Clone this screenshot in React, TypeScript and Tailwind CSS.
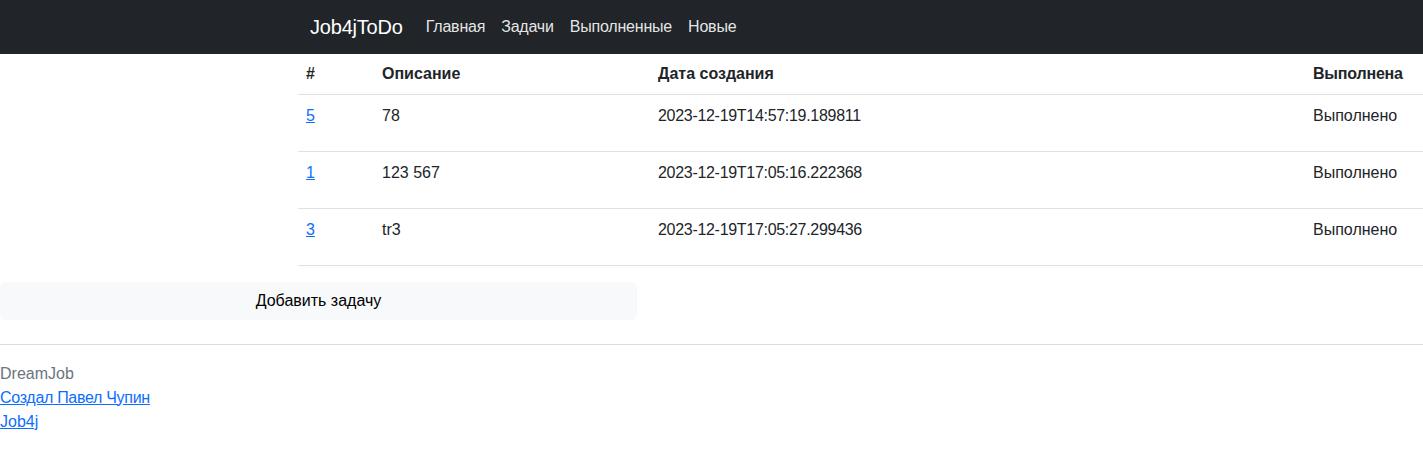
const rows = [
  { id: 5, description: "78", created: "2023-12-19T14:57:19.189811", done: "Выполнено" },
  { id: 1, description: "123 567", created: "2023-12-19T17:05:16.222368", done: "Выполнено" },
  { id: 3, description: "tr3", created: "2023-12-19T17:05:27.299436", done: "Выполнено" },
];

export default function App() {
  return (
    <div className="min-h-screen bg-white font-['Liberation_Sans',Arial,sans-serif] text-[16px] leading-6 text-[#212529]">
      <nav className="flex h-[54px] items-center bg-[#212529] pl-[310px]">
        <a className="mr-[23px] text-[20px] tracking-[-0.2px] text-white">Job4jToDo</a>
        <div className="flex gap-[16px] tracking-[-0.2px] text-[rgba(255,255,255,0.9)]">
          <a>Главная</a>
          <a>Задачи</a>
          <a>Выполненные</a>
          <a>Новые</a>
        </div>
      </nav>
      <div className="pl-[298px]">
        <table className="w-full border-collapse text-left">
          <thead>
            <tr className="h-[40px] border-b border-[#dee2e6]">
              <th className="w-[76px] px-2 font-bold">#</th>
              <th className="w-[276px] px-2 font-bold">Описание</th>
              <th className="px-2 font-bold">Дата создания</th>
              <th className="w-[118px] px-2 font-bold tracking-[-0.2px]">Выполнена</th>
            </tr>
          </thead>
          <tbody>
            {rows.map((row) => (
              <tr key={row.id} className="h-[57px] border-b border-[#dee2e6] align-top">
                <td className="px-2 pt-[9px]">
                  <a className="text-[#0d6efd] underline">{row.id}</a>
                </td>
                <td className="px-2 pt-[9px]">{row.description}</td>
                <td className="px-2 pt-[9px] tracking-[-0.3px]">{row.created}</td>
                <td className="px-2 pt-[9px]">{row.done}</td>
              </tr>
            ))}
          </tbody>
        </table>
      </div>
      <div className="mt-[16px] w-[637px]">
        <button className="h-[38px] w-full rounded-md bg-[#f8f9fa] text-center text-black">Добавить задачу</button>
      </div>
      <hr className="mt-[24px] border-t border-[#dcdcdc]" />
      <footer className="pt-[17px]">
        <p className="text-[#6c757d]">DreamJob</p>
        <a className="block tracking-[-0.3px] text-[#0d6efd] underline">Создал Павел Чупин</a>
        <a className="block text-[#0d6efd] underline">Job4j</a>
      </footer>
    </div>
  );
}
